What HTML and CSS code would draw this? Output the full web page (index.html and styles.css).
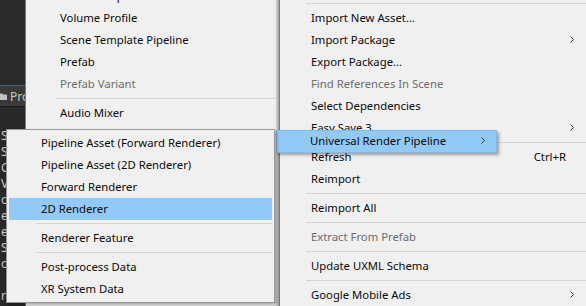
FILE: index.html
```html
<!DOCTYPE html>
<html lang="en">
  <head>
    <meta charset="UTF-8" />
    <title>Assets Menu</title>
    <link rel="stylesheet" href="styles.css">
  </head>
  <body>
    <div class="screen">
      <aside class="project">
        <div class="project-top"></div>
        <div class="project-tabs">
          <svg class="folder" width="8" height="7" viewBox="0 0 8 7">
            <path d="M0 0.5h3l1 1h4v5.5h-8z" fill="#c2c2c2" />
          </svg>
          <span>Pro</span>
        </div>
        <div class="project-toolbar"></div>
        <ul class="project-list">
          <li>S</li>
          <li>S</li>
          <li>C</li>
          <li>V</li>
          <li>o</li>
          <li>e</li>
          <li>e</li>
          <li>S</li>
          <li>o</li>
          <li></li>
          <li>r</li>
        </ul>
      </aside>

      <!-- main context menu -->
      <div class="menu menu-context">
        <div class="sep"></div>
        <div class="item"><span class="label">Import New Asset...</span></div>
        <div class="item"><span class="label">Import Package</span><span class="arrow"><svg width="4" height="7" viewBox="0 0 4 7"><path d="M0.5 0.5l3 3-3 3" fill="none" stroke="#333" /></svg></span></div>
        <div class="item"><span class="label">Export Package...</span></div>
        <div class="item disabled"><span class="label">Find References In Scene</span></div>
        <div class="item"><span class="label">Select Dependencies</span></div>
        <div class="item"><span class="label">Easy Save 3</span><span class="arrow"><svg width="4" height="7" viewBox="0 0 4 7"><path d="M0.5 0.5l3 3-3 3" fill="none" stroke="#333" /></svg></span></div>
        <div class="sep"></div>
        <div class="item"><span class="label">Refresh</span><span class="shortcut">Ctrl+R</span></div>
        <div class="item"><span class="label">Reimport</span></div>
        <div class="sep"></div>
        <div class="item"><span class="label">Reimport All</span></div>
        <div class="sep"></div>
        <div class="item disabled"><span class="label">Extract From Prefab</span></div>
        <div class="sep"></div>
        <div class="item"><span class="label">Update UXML Schema</span></div>
        <div class="sep"></div>
        <div class="item"><span class="label">Google Mobile Ads</span><span class="arrow"><svg width="4" height="7" viewBox="0 0 4 7"><path d="M0.5 0.5l3 3-3 3" fill="none" stroke="#333" /></svg></span></div>
      </div>

      <!-- Create submenu -->
      <div class="menu menu-create">
        <div class="item"><span class="label">Scene Template From Scene</span></div>
        <div class="item"><span class="label">Volume Profile</span></div>
        <div class="item"><span class="label">Scene Template Pipeline</span></div>
        <div class="item"><span class="label">Prefab</span></div>
        <div class="item disabled"><span class="label">Prefab Variant</span></div>
        <div class="sep"></div>
        <div class="item"><span class="label">Audio Mixer</span></div>
      </div>

      <div class="hover-item">
        <span class="label">Universal Render Pipeline</span>
        <span class="arrow"><svg width="4" height="7" viewBox="0 0 4 7"><path d="M0.5 0.5l3 3-3 3" fill="none" stroke="#333" /></svg></span>
      </div>

      <!-- Universal Render Pipeline submenu -->
      <div class="menu menu-urp">
        <div class="item"><span class="label">Pipeline Asset (Forward Renderer)</span></div>
        <div class="item"><span class="label">Pipeline Asset (2D Renderer)</span></div>
        <div class="item"><span class="label">Forward Renderer</span></div>
        <div class="item selected"><span class="label">2D Renderer</span></div>
        <div class="sep"></div>
        <div class="item"><span class="label">Renderer Feature</span></div>
        <div class="sep"></div>
        <div class="item"><span class="label">Post-process Data</span></div>
        <div class="item"><span class="label">XR System Data</span></div>
      </div>
    </div>
  </body>
</html>
```

FILE: styles.css
```css
* {
  box-sizing: border-box;
}

body {
  margin: 0;
  background: #f0f0f0;
  font-family: "Noto Sans", "Noto Sans CJK KR", sans-serif;
  font-size: 11.3px;
  color: #0a0a0a;
  overflow: hidden;
}

.screen {
  position: relative;
  width: 586px;
  height: 306px;
  overflow: hidden;
}

/* dark unity panel on the left */
.project {
  width: 26px;
  height: 100%;
  background: #282828;
  display: flex;
  flex-direction: column;
  overflow: hidden;
}

.project-top {
  height: 86px;
  background: #2a2a2a;
  border-bottom: 1px solid #46607a;
}

.project-tabs {
  height: 20px;
  background: #3a3a3a;
  display: flex;
  align-items: center;
  gap: 3px;
  color: #c8c8c8;
  white-space: nowrap;
  font-size: 12px;
}

.folder {
  flex: none;
  margin-left: -1px;
}

.project-toolbar {
  height: 22px;
  background: #282828;
  border-top: 1px solid #1c1c1c;
}

.project-list {
  list-style: none;
  margin: 0;
  padding: 0 0 0 1px;
  color: #c8c8c8;
  font-size: 12px;
}

.project-list li {
  height: 16px;
  line-height: 16px;
}

/* windows style menus */
.menu {
  position: absolute;
  background: #f0f0f0;
  border: 1px solid #979797;
  box-shadow: 2px 2px 3px rgba(0, 0, 0, 0.3);
  display: flex;
  flex-direction: column;
  white-space: nowrap;
}

.item {
  height: 22px;
  flex: none;
  display: flex;
  align-items: center;
  padding-bottom: 2px;
}

.item .label {
  flex: 1;
}

.disabled {
  color: #6d6d6d;
}

.sep {
  height: 1px;
  flex: none;
  margin: 3px 3px 3px 26px;
  background: #d5d5d5;
}

.arrow {
  display: flex;
  align-items: center;
}

.menu-context {
  left: 279px;
  top: -1px;
  right: -10px;
  height: 320px;
  box-shadow: none;
  border-color: #7a7a7a;
}

.menu-context .item {
  padding-left: 31px;
}

.menu-context .arrow {
  margin-right: 21px;
}

.menu-context .shortcut {
  margin-right: 29px;
}

.menu-create {
  left: 25px;
  top: -16px;
  width: 255px;
  height: 340px;
  border-color: #7a7a7a;
  box-shadow: inset -4px 0 3px -2px rgba(0, 0, 0, 0.35);
}

.menu-create .item {
  padding-left: 34px;
}

.menu-create .sep {
  margin-left: 29px;
  margin-right: 4px;
}

.hover-item {
  position: absolute;
  left: 276px;
  top: 130px;
  width: 221px;
  height: 23px;
  display: flex;
  align-items: center;
  padding: 0 11px 2px 33px;
  background: #93c9f5;
  border: 1px solid #86b9e2;
  box-shadow: 2px 2px 3px rgba(0, 0, 0, 0.35);
  white-space: nowrap;
}

.hover-item .label {
  flex: 1;
}

.menu-urp {
  left: 6px;
  top: 129px;
  width: 269px;
  height: 174px;
  padding: 2px 0;
}

.menu-urp .item {
  margin: 0 2px;
  padding-left: 32px;
}

.menu-urp .sep {
  margin-left: 29px;
  margin-right: 2px;
}

.selected {
  background: #93c9f5;
}
```
